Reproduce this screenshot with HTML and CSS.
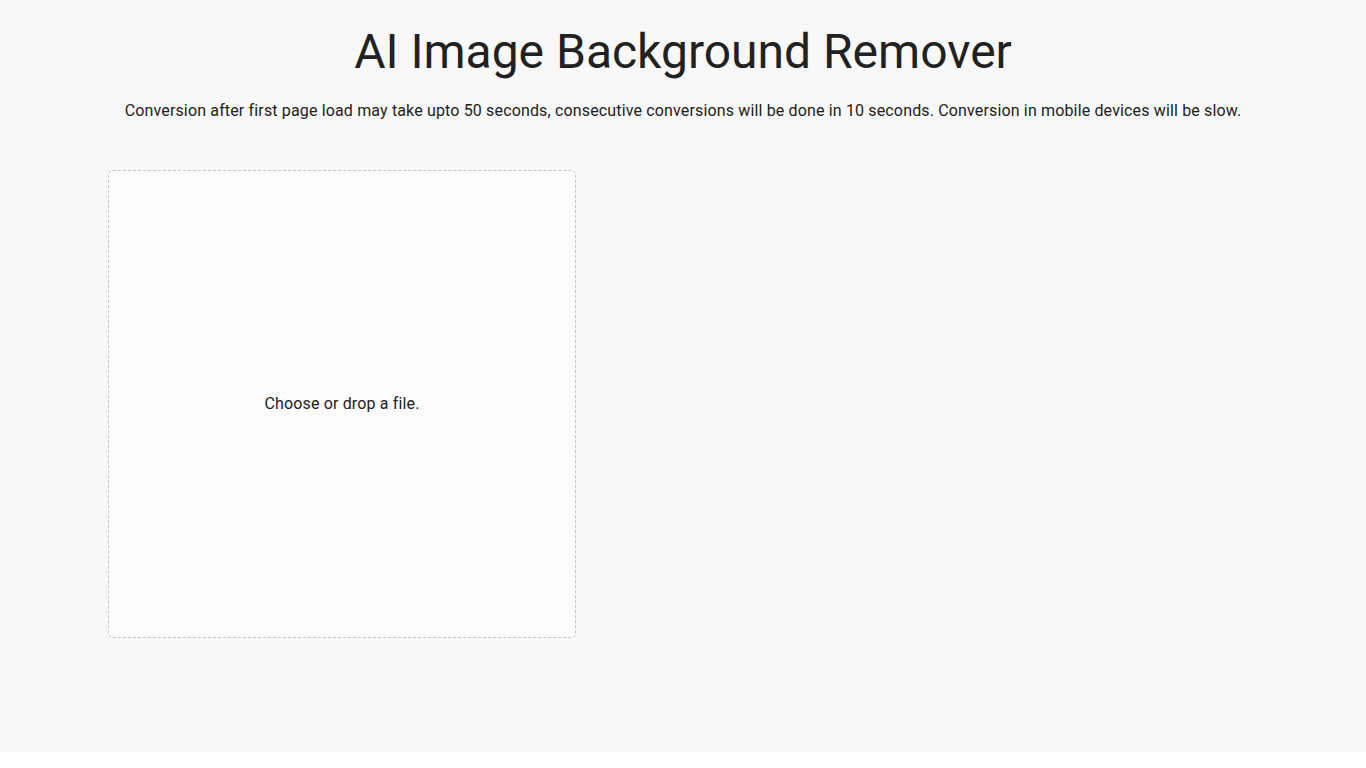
FILE: index.html
```html
<!DOCTYPE html>
<html lang="en">
<head>
<meta charset="utf-8">
<title>AI Image Background Remover</title>
<link rel="stylesheet" href="styles.css">
</head>
<body>
<div class="app">
  <header class="header">
    <h1 class="title">AI Image Background Remover</h1>
    <p class="subtitle">Conversion after first page load may take upto 50 seconds, consecutive conversions will be done in 10 seconds. Conversion in mobile devices will be slow.</p>
  </header>
  <main class="content">
    <label class="dropzone">
      <span class="dropzone-text">Choose or drop a file.</span>
    </label>
  </main>
</div>
</body>
</html>
```

FILE: styles.css
```css
html, body {
  margin: 0;
  padding: 0;
  background: #ffffff;
}

body {
  font-family: Roboto, "Liberation Sans", sans-serif;
  color: #212121;
}

.app {
  background: #f8f8f8;
  height: 752px;
  box-sizing: border-box;
  padding-top: 24px;
}

.header {
  text-align: center;
}

.title {
  margin: 0;
  font-size: 48px;
  font-weight: 400;
  line-height: 56px;
  letter-spacing: 0;
}

.subtitle {
  margin: 19px 0 0;
  font-size: 16px;
  line-height: 24px;
  letter-spacing: 0.15px;
}

.content {
  width: 1150px;
  margin: 47px auto 0;
  display: flex;
}

.dropzone {
  width: 468px;
  height: 468px;
  box-sizing: border-box;
  border: 1px dashed #c4c4c4;
  border-radius: 5px;
  background: #fcfcfc;
  display: flex;
  align-items: center;
  justify-content: center;
  cursor: pointer;
}

.dropzone-text {
  font-size: 16px;
  line-height: 24px;
  letter-spacing: 0.15px;
}
```
